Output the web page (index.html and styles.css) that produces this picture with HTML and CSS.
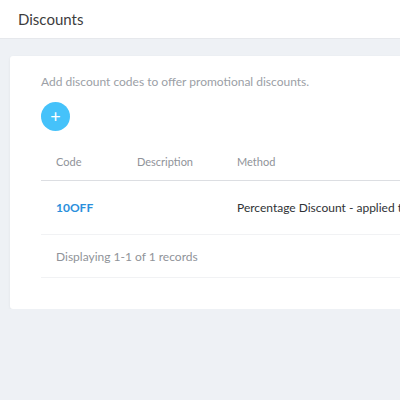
FILE: index.html
```html
<!DOCTYPE html>
<html lang="en">
<head>
    <meta charset="UTF-8">
    <title>Discounts</title>
    <link rel="stylesheet" href="styles.css">
</head>
<body>
    <div class="topbar">
        <h1>Discounts</h1>
    </div>

    <div class="page">
        <div class="card">
            <p class="intro">Add discount codes to offer promotional discounts.</p>
            <button class="addBtn">+</button>

            <table class="codes">
                <thead>
                    <tr>
                        <th class="colCode">Code</th>
                        <th class="colDesc">Description</th>
                        <th>Method</th>
                    </tr>
                </thead>
                <tbody>
                    <tr>
                        <td class="colCode"><a href="#">10OFF</a></td>
                        <td class="colDesc"></td>
                        <td class="method">Percentage Discount - applied to all products</td>
                    </tr>
                    <tr class="footer">
                        <td colspan="3">Displaying 1-1 of 1 records</td>
                    </tr>
                </tbody>
            </table>
        </div>
    </div>
</body>
</html>
```

FILE: styles.css
```css
body {
    margin: 0;
    font-family: Lato, "Noto Sans", sans-serif;
    background: #eef1f5;
    width: 460px;
    overflow: hidden;
}
.topbar {
    background: #fff;
    height: 38px;
    border-bottom: 1px solid #e6e8ec;
    padding: 0 18px;
    display: flex;
    align-items: center;
}
.topbar h1 {
    margin: 0;
    font-size: 15px;
    font-weight: 400;
    color: #3d3d3d;
}
.page {
    padding: 17px 0 0 10px;
}
.card {
    background: #fff;
    border-radius: 3px;
    box-shadow: 0 1px 3px rgba(0, 0, 0, 0.06);
    padding: 18px 0 31px 31px;
}
.intro {
    margin: 0;
    font-size: 12px;
    color: #9ba0a6;
}
.addBtn {
    margin-top: 13px;
    width: 29px;
    height: 29px;
    border-radius: 50%;
    border: none;
    background: #45c2fa;
    color: #fff;
    font-size: 18px;
    line-height: 29px;
    padding: 0;
    font-family: inherit;
}
.codes {
    width: 100%;
    table-layout: fixed;
    border-collapse: collapse;
    margin-top: 11px;
    font-size: 12px;
}
.codes th {
    text-align: left;
    font-weight: 400;
    color: #8f9399;
    font-size: 11px;
    height: 38px;
    padding: 0 0 0 15px;
    border-bottom: 1px solid #dcdee2;
}
.codes td {
    padding: 0 0 0 15px;
    height: 53px;
    border-bottom: 1px solid #f1f2f4;
    color: #2f3236;
    white-space: nowrap;
    overflow: hidden;
}
.colCode {
    width: 66px;
}
.colDesc {
    width: 85px;
}
.codes a {
    color: #2b8fdc;
    text-decoration: none;
    font-weight: 700;
}
.codes .footer td {
    height: 42px;
    color: #8f9399;
}
```
